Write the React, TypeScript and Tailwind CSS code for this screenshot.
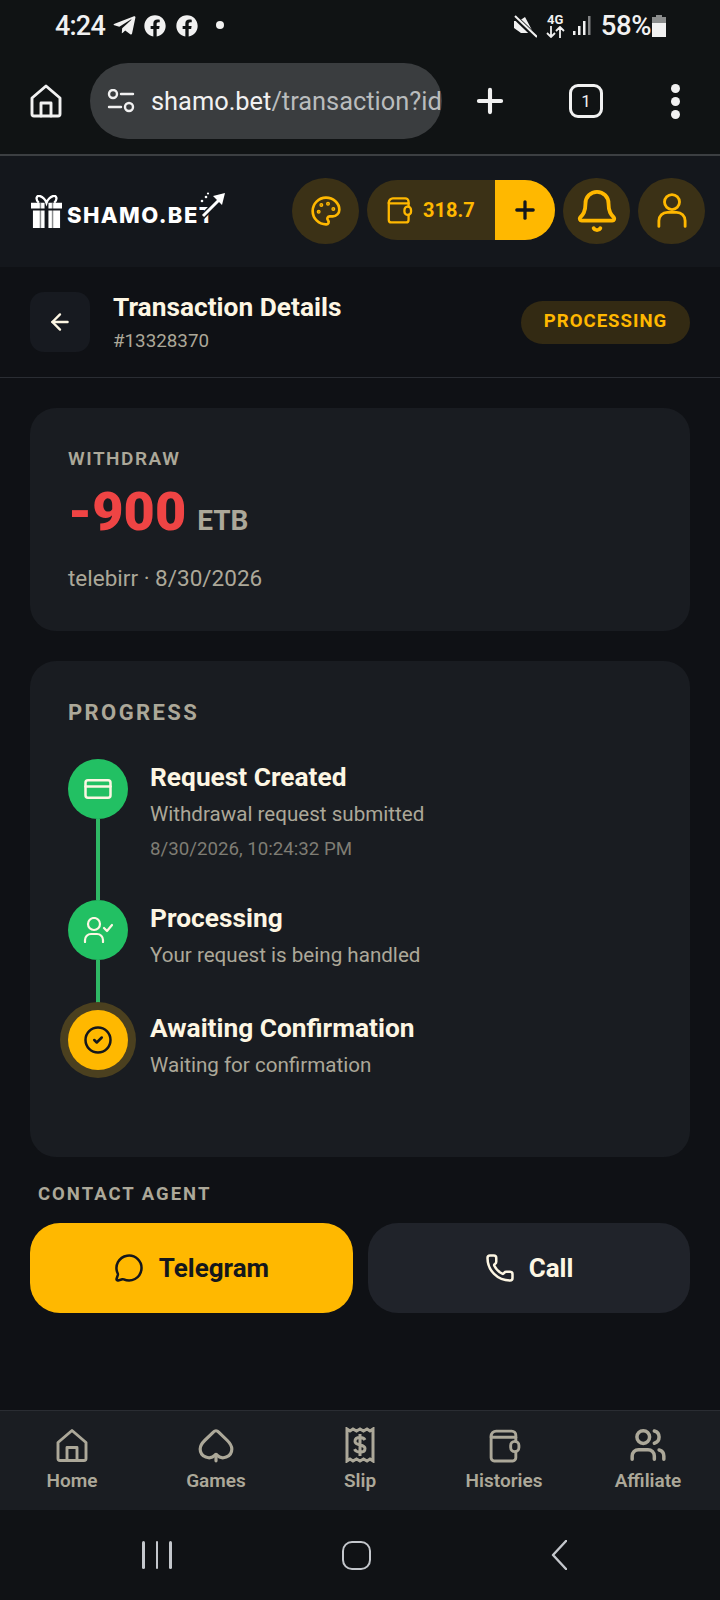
import { ArrowLeft, Bell, CircleCheck, CreditCard, MessageCircle, Palette, Phone, Plus, Spade, Users } from "lucide-react";
import { FaFacebook, FaTelegramPlane } from "react-icons/fa";

function HomeIcon({ className }: { className?: string }) {
  return (
    <svg viewBox="0 0 32 34" fill="none" stroke="currentColor" strokeWidth="2.900" strokeLinejoin="round" strokeLinecap="round" className={className}>
      <path d="M2 14 16 2l14 12v16a2 2 0 0 1-2 2H4a2 2 0 0 1-2-2z" />
      <path d="M11 32V19h10v13" />
    </svg>
  );
}

function WalletIcon({ className }: { className?: string }) {
  return (
    <svg viewBox="0 0 32 34" fill="none" stroke="currentColor" strokeWidth="2.800" strokeLinejoin="round" strokeLinecap="round" className={className}>
      <path d="M3 8a5 5 0 0 1 5-5h15a4 4 0 0 1 4 4v2H3" />
      <path d="M3 8v21a3 3 0 0 0 3 3h18a3 3 0 0 0 3-3v-6" />
      <path d="M27 9v4" />
      <rect x="22" y="13" width="8" height="10" rx="4" />
    </svg>
  );
}

function SlipIcon({ className }: { className?: string }) {
  return (
    <svg viewBox="0 0 30 36" fill="none" stroke="currentColor" strokeWidth="3" strokeLinejoin="miter" className={className}>
      <path d="M2 2v32l3-2 3 2 3.500-2 3.500 2 3.500-2 3.500 2 3-2 3 2V2l-3 2-3-2-3.500 2L15 2l-3.500 2L8 2 5 4z" />
      <path d="M20 13c-1-2-3-2.500-5-2.500-3 0-5 1.500-5 3.700 0 5 10 2.500 10 7.300 0 2.300-2 3.700-5 3.700-2.500 0-4.500-1-5.500-3M15 7v22" />
    </svg>
  );
}

function UserIcon({ className }: { className?: string }) {
  return (
    <svg viewBox="0 0 32 38" fill="none" stroke="currentColor" strokeWidth="3" strokeLinecap="round" className={className}>
      <circle cx="16" cy="10" r="8" />
      <path d="M2 36v-6a9 9 0 0 1 9-9h10a9 9 0 0 1 9 9v6" />
    </svg>
  );
}

function UserCheckIcon({ className }: { className?: string }) {
  return (
    <svg viewBox="0 0 30 26" fill="none" stroke="currentColor" strokeWidth="2.200" strokeLinecap="round" strokeLinejoin="round" className={className}>
      <circle cx="11" cy="7" r="6" />
      <path d="M2 25v-2a6 6 0 0 1 6-6h6a6 6 0 0 1 6 6v2" />
      <path d="m21 11 3 3 5-6" />
    </svg>
  );
}

function Logo() {
  return (
    <div className="relative flex items-end w-[196px] h-[34px]">
      <svg viewBox="0 0 32 34" className="w-[31px] h-[33px] shrink-0 text-white" fill="currentColor">
        <path d="M8 8C4 4 6 0 9 1c3 .5 6 4 7 7 1-3 4-6.500 7-7 3-1 5 3 1 7" fill="none" stroke="currentColor" strokeWidth="2.400" />
        <path d="M0 8h14v6H0zM18 8h14v6H18zM2 16h12v18H2zM18 16h12v18H18z" />
        <path d="M9 8h1.500v26H9zM21.500 8H23v26h-1.500z" fill="#14171c" opacity="0.5" />
      </svg>
      <span className="ml-[5px] mb-[2px] text-[22px] leading-[22px] font-extrabold tracking-[1.400px] text-white font-['Inter',sans-serif]">SHAMO.BET</span>
      <svg viewBox="0 0 30 30" className="absolute left-[166px] top-[-2px] w-[30px] h-[30px] text-white" fill="none">
        <path d="M5 25 25 5" stroke="#14171c" strokeWidth="6" />
        <path d="M6 24 25 5" stroke="currentColor" strokeWidth="3" />
        <path d="M16 4 28 1l-3 12z" fill="currentColor" />
        <circle cx="5" cy="9" r="1.300" fill="currentColor" />
        <circle cx="9" cy="5" r="1.300" fill="currentColor" />
        <circle cx="11" cy="1.500" r="1.100" fill="currentColor" />
      </svg>
    </div>
  );
}

function StatusBar() {
  return (
    <div className="h-[52px] flex items-end pb-[11px] pl-[55px] pr-[54px] text-[#f1f1f1]">
      <span className="text-[27px] leading-[30px] font-medium tracking-[-0.800px] w-[49px] whitespace-nowrap">4:24</span>
      <FaTelegramPlane className="ml-[8px] mb-[3px] w-[25px] h-[25px]" />
      <FaFacebook className="ml-[7px] mb-[4px] w-[22px] h-[22px]" />
      <FaFacebook className="ml-[10px] mb-[4px] w-[22px] h-[22px]" />
      <span className="ml-[18px] mb-[12px] w-[8px] h-[8px] rounded-full bg-[#f1f1f1]" />
      <div className="flex-1" />
      <svg viewBox="0 0 24 24" className="w-[24px] h-[24px] mb-[3px]" fill="currentColor">
        <path d="M1 7h5l6-4 8 15-3 1-9 0-7-5z" />
        <path d="M1 2 23 23" stroke="#101314" strokeWidth="5" />
        <path d="M2 2 24 23" stroke="currentColor" strokeWidth="2" />
      </svg>
      <div className="ml-[9px] mb-[3px] flex flex-col items-center w-[19px]">
        <span className="text-[13px] leading-[13px] font-bold">4G</span>
        <svg viewBox="0 0 19 12" className="w-[19px] h-[12px]" fill="none" stroke="currentColor" strokeWidth="1.800">
          <path d="M5 0v11M1 7l4 4 4-4M14 12V1M10 5l4-4 4 4" />
        </svg>
      </div>
      <svg viewBox="0 0 18 20" className="ml-[8px] mb-[5px] w-[18px] h-[20px]" fill="currentColor">
        <rect x="0" y="15" width="2.500" height="4" />
        <rect x="5" y="10" width="2.500" height="9" />
        <rect x="10" y="5" width="2.500" height="14" />
        <rect x="15" y="0" width="2.500" height="19" opacity="0.5" />
      </svg>
      <span className="ml-[10px] text-[27.500px] leading-[30px] font-medium tracking-[-0.400px]">58%</span>
      <svg viewBox="0 0 14 22" className="ml-[1px] mb-[4px] w-[14px] h-[22px]">
        <path d="M4 0h6v2h4v6H0V2h4z" fill="#8b8d8d" />
        <path d="M0 8h14v14H0z" fill="#f1f1f1" />
      </svg>
    </div>
  );
}

function BrowserBar() {
  return (
    <div className="h-[104px] flex items-center pb-[4px] border-b-2 border-[#3c3f42] text-[#f1f1f1]">
      <HomeIcon className="ml-[30px] w-[32px] h-[34px]" />
      <div className="ml-[28px] w-[352px] h-[76px] rounded-full bg-[#3a3d3f] flex items-center pl-[17px]">
        <svg viewBox="0 0 28 24" className="w-[28px] h-[24px]" fill="none" stroke="currentColor" strokeWidth="2.400" strokeLinecap="round">
          <circle cx="6" cy="5" r="4" />
          <path d="M14 5h12M2 18h12" />
          <circle cx="22" cy="18" r="4" />
        </svg>
        <span className="ml-[16px] text-[25.400px] leading-[30px] whitespace-nowrap text-[#b9bcbd]"><span className="text-[#f1f1f1]">shamo.bet</span>/transaction?id</span>
      </div>
      <Plus className="ml-[29px] w-[38px] h-[38px]" strokeWidth={2.600} absoluteStrokeWidth />
      <div className="ml-[60px] w-[34px] h-[34px] rounded-[9px] border-[3px] border-[#f1f1f1] flex items-center justify-center text-[17px] leading-none">1</div>
      <div className="ml-[68px] flex flex-col gap-[4px]">
        <span className="w-[9px] h-[9px] rounded-full bg-[#f1f1f1]" />
        <span className="w-[9px] h-[9px] rounded-full bg-[#f1f1f1]" />
        <span className="w-[9px] h-[9px] rounded-full bg-[#f1f1f1]" />
      </div>
    </div>
  );
}

function SiteHeader() {
  return (
    <div className="h-[111px] bg-[#14171c] flex items-center pl-[31px] pr-[15px] pb-[2px]">
      <Logo />
      <div className="ml-auto flex items-center gap-[8px] text-[#ffb800]">
        <div className="w-[67px] h-[66px] rounded-full bg-[#3b3116] flex items-center justify-center"><Palette className="w-[32px] h-[32px]" strokeWidth={2} /></div>
        <div className="w-[188px] h-[60px] mb-[2px] rounded-full bg-[#3b3116] flex overflow-hidden">
          <div className="flex-1 flex items-center pl-[19px] gap-[10px]">
            <WalletIcon className="w-[27px] h-[28px]" />
            <span className="text-[20px] font-bold leading-none">318.7</span>
          </div>
          <div className="w-[60px] bg-[#ffb800] flex items-center justify-center text-[#14171c]"><Plus className="w-[28px] h-[28px]" strokeWidth={2.800} /></div>
        </div>
        <div className="w-[67px] h-[66px] rounded-full bg-[#3b3116] flex items-center justify-center"><Bell className="w-[46px] h-[46px]" strokeWidth={2} /></div>
        <div className="w-[67px] h-[66px] rounded-full bg-[#3b3116] flex items-center justify-center"><UserIcon className="w-[30px] h-[37px]" /></div>
      </div>
    </div>
  );
}

function TitleRow() {
  return (
    <div className="h-[111px] border-b border-[#2a2d33] flex items-center pl-[30px] pr-[30px]">
      <div className="w-[60px] h-[60px] rounded-[14px] bg-[#171a20] flex items-center justify-center text-[#fdf6e3]"><ArrowLeft className="w-[26px] h-[26px]" strokeWidth={2.200} /></div>
      <div className="ml-[23px]">
        <div className="text-[26.300px] leading-[30px] font-bold text-[#fdf6e3]">Transaction Details</div>
        <div className="mt-[7px] text-[18.800px] leading-[24px] text-[#aca899]">#13328370</div>
      </div>
      <div className="ml-auto w-[169px] h-[43px] rounded-full bg-[#332a13] flex items-center justify-center text-[18.600px] font-bold tracking-[1px] text-[#ffb800]">PROCESSING</div>
    </div>
  );
}

const steps = [
  { title: "Request Created", desc: "Withdrawal request submitted", time: "8/30/2026, 10:24:32 PM", h: "h-[141px]" },
  { title: "Processing", desc: "Your request is being handled", h: "h-[110px]" },
  { title: "Awaiting Confirmation", desc: "Waiting for confirmation", h: "h-[80px]", active: true },
];

function Step({ step, index }: { step: (typeof steps)[number]; index: number }) {
  return (
    <div className={`flex ${step.h}`}>
      <div className="w-[60px] flex flex-col items-center">
        <div className={step.active ? "relative z-10 w-[60px] h-[60px] rounded-full bg-[#ffb800] shadow-[0_0_0_8px_#4b401f] flex items-center justify-center text-[#14171c]" : "w-[60px] h-[60px] rounded-full bg-[#22c063] flex items-center justify-center text-[#fdf6e3]"}>
          {index === 0 && <CreditCard className="w-[30px] h-[30px]" strokeWidth={2} />}
          {index === 1 && <UserCheckIcon className="w-[30px] h-[26px]" />}
          {index === 2 && <CircleCheck className="w-[30px] h-[30px]" strokeWidth={2} />}
        </div>
        {!step.active && <div className="w-[4px] flex-1 bg-[#2fb865]" />}
      </div>
      <div className="ml-[22px] pt-[1px]">
        <div className="text-[26.300px] leading-[34px] font-bold text-[#fdf6e3]">{step.title}</div>
        <div className="mt-[5px] text-[20.600px] leading-[30px] text-[#aca899]">{step.desc}</div>
        {step.time && <div className="mt-[7px] text-[18.700px] leading-[26px] text-[#7f7d74]">{step.time}</div>}
      </div>
    </div>
  );
}

function BottomNav() {
  const items = [
    { label: "Home", icon: <HomeIcon className="w-[32px] h-[35px]" /> },
    { label: "Games", icon: <Spade className="w-[38px] h-[38px]" strokeWidth={2} /> },
    { label: "Slip", icon: <SlipIcon className="w-[30px] h-[36px]" /> },
    { label: "Histories", icon: <WalletIcon className="w-[33px] h-[35px]" /> },
    { label: "Affiliate", icon: <Users className="w-[38px] h-[38px]" strokeWidth={2.200} /> },
  ];
  return (
    <nav className="h-[100px] border-t border-[#2a2d33] bg-[#1a1d22] grid grid-cols-5 text-[#aca899]">
      {items.map((item) => (
        <div key={item.label} className="flex flex-col items-center pt-[15px]">
          <div className="h-[38px] flex items-center justify-center">{item.icon}</div>
          <span className="mt-[5px] text-[19px] leading-[24px] font-semibold">{item.label}</span>
        </div>
      ))}
    </nav>
  );
}

function SystemNav() {
  return (
    <div className="h-[90px] bg-[#101215] grid grid-cols-3 items-center text-[#c4c7cc] pl-[110px] pr-[110px]">
      <div className="flex justify-start gap-[11px] pl-[32px]">
        <span className="w-[2.500px] h-[28px] bg-[#c4c7cc] rounded-full" />
        <span className="w-[2.500px] h-[28px] bg-[#c4c7cc] rounded-full" />
        <span className="w-[2.500px] h-[28px] bg-[#c4c7cc] rounded-full" />
      </div>
      <div className="flex justify-center pr-[6px]"><span className="w-[29px] h-[29px] rounded-[10px] border-[2.500px] border-[#c4c7cc]" /></div>
      <div className="flex justify-end pr-[43px]">
        <svg viewBox="0 0 16 30" className="w-[16px] h-[30px]" fill="none" stroke="currentColor" strokeWidth="2.400" strokeLinecap="round" strokeLinejoin="round">
          <path d="M15 1 2 15l13 14" />
        </svg>
      </div>
    </div>
  );
}

export default function App() {
  return (
    <div className="w-[720px] h-[1600px] flex flex-col overflow-hidden bg-[#0f1115] font-['Roboto',sans-serif]">
      <div className="bg-[#101314]">
        <StatusBar />
        <BrowserBar />
      </div>
      <SiteHeader />
      <TitleRow />

      <main className="flex-1 px-[30px] pt-[30px]">
        <section className="h-[223px] rounded-[26px] bg-[#191c21] pl-[38px] pt-[39px]">
          <div className="text-[19px] leading-[24px] font-semibold tracking-[1.500px] text-[#aca899]">WITHDRAW</div>
          <div className="mt-[11px] flex items-baseline h-[60px]">
            <span className="text-[54px] leading-[60px] font-black text-[#ef4444]">-900</span>
            <span className="ml-[11px] text-[28px] font-bold text-[#aca899]">ETB</span>
          </div>
          <div className="mt-[21px] text-[22.500px] leading-[30px] text-[#aca899]">telebirr · 8/30/2026</div>
        </section>

        <section className="mt-[30px] h-[496px] rounded-[26px] bg-[#191c21] pl-[38px] pt-[38px]">
          <div className="text-[22px] leading-[28px] font-bold tracking-[2.400px] text-[#aca899]">PROGRESS</div>
          <div className="mt-[32px]">
            {steps.map((step, i) => (
              <Step key={step.title} step={step} index={i} />
            ))}
          </div>
        </section>

        <div className="mt-[25px] ml-[8px] text-[18.500px] leading-[24px] font-bold tracking-[2px] text-[#aca899]">CONTACT AGENT</div>
        <div className="mt-[17px] grid grid-cols-[323px_322px] gap-[15px]">
          <button className="h-[90px] rounded-[30px] bg-[#ffb800] flex items-center justify-center gap-[15px] text-[26px] font-bold text-[#14171c]">
            <MessageCircle className="w-[30px] h-[30px]" strokeWidth={2} />
            Telegram
          </button>
          <button className="h-[90px] rounded-[30px] bg-[#20232a] flex items-center justify-center gap-[14px] text-[26px] font-bold text-[#fdf6e3]">
            <Phone className="w-[30px] h-[30px]" strokeWidth={2} />
            Call
          </button>
        </div>
      </main>

      <BottomNav />
      <SystemNav />
    </div>
  );
}
